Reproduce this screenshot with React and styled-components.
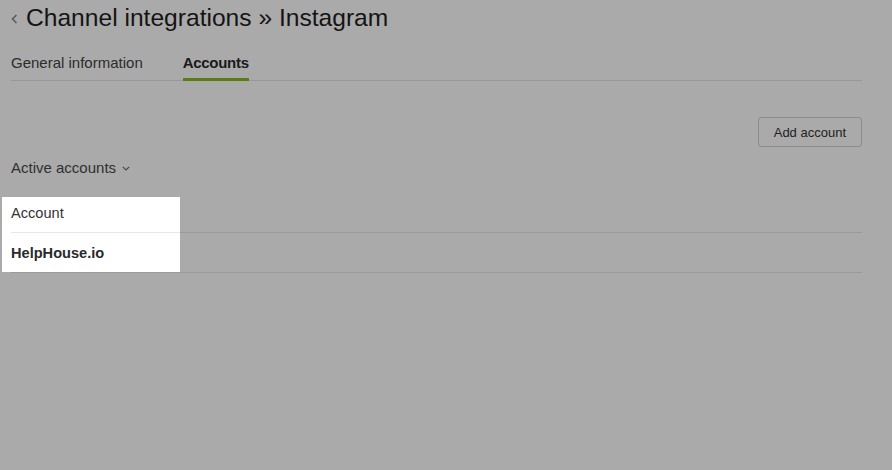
import React from 'react';
import styled, { createGlobalStyle } from 'styled-components';

const GlobalStyle = createGlobalStyle`
  body {
    margin: 0;
    background: #ffffff;
    font-family: "Liberation Sans", Arial, sans-serif;
    color: #333;
    overflow: hidden;
  }
`;

const Page = styled.div`
  padding: 0 30px 0 11px;
  min-height: 470px;
  box-sizing: border-box;
`;

const TitleRow = styled.h1`
  display: flex;
  align-items: center;
  gap: 8px;
  margin: 0;
  height: 36px;
  font-size: 24.6px;
  font-weight: 400;
  color: #1f1f1f;
`;

const BackIcon = styled.svg`
  width: 7px;
  height: 10px;
  margin-top: 1px;
  color: #8a8a8a;
`;

const Tabs = styled.nav`
  display: flex;
  gap: 40px;
  margin-top: 9px;
  border-bottom: 1px solid #e4e4e4;
`;

const Tab = styled.div`
  padding: 9px 0 7px;
  font-size: 15px;
  font-weight: ${({ active }) => (active ? 700 : 400)};
  letter-spacing: ${({ active }) => (active ? '-0.3px' : '0')};
  color: ${({ active }) => (active ? '#2a2a2a' : '#444')};
  border-bottom: 3px solid ${({ active }) => (active ? '#86bc1c' : 'transparent')};
  margin-bottom: -1px;
`;

const Toolbar = styled.div`
  display: flex;
  justify-content: flex-end;
  margin-top: 36px;
`;

const Button = styled.button`
  height: 30px;
  padding: 0 15px;
  background: #fff;
  border: 1px solid #d2d2d2;
  border-radius: 3px;
  font-family: inherit;
  font-size: 13px;
  color: #333;
`;

const Filter = styled.div`
  display: flex;
  align-items: center;
  gap: 6px;
  margin-top: 10px;
  height: 20px;
  font-size: 15px;
  color: #4a4a4a;
`;

const Caret = styled.svg`
  width: 8px;
  height: 5px;
  margin-top: 3px;
  color: #666;
`;

const TableWrap = styled.div`
  position: relative;
  margin-top: 20px;
`;

const Spotlight = styled.div`
  position: absolute;
  left: -9px;
  top: 0;
  width: 178px;
  height: 75px;
  box-shadow: 0 0 0 3000px rgba(0, 0, 0, 0.333);
  pointer-events: none;
`;

const Row = styled.div`
  display: flex;
  align-items: center;
  box-sizing: border-box;
  height: ${({ head }) => (head ? '36px' : '40px')};
  padding-bottom: ${({ head }) => (head ? '4px' : '0')};
  border-bottom: 1px solid #e8e8e8;
  font-size: 14.6px;
  font-weight: ${({ head }) => (head ? 400 : 700)};
  color: ${({ head }) => (head ? '#333' : '#2a2a2a')};
`;

export default function App() {
  return (
    <Page>
      <GlobalStyle />
      <TitleRow>
        <BackIcon viewBox="0 0 7 10" fill="none">
          <polyline points="5.5,1 1.5,5 5.5,9" stroke="currentColor" strokeWidth="1.6" />
        </BackIcon>
        Channel integrations » Instagram
      </TitleRow>
      <Tabs>
        <Tab>General information</Tab>
        <Tab active>Accounts</Tab>
      </Tabs>
      <Toolbar>
        <Button>Add account</Button>
      </Toolbar>
      <Filter>
        Active accounts
        <Caret viewBox="0 0 8 5" fill="none">
          <polyline points="0.8,0.8 4,4 7.2,0.8" stroke="currentColor" strokeWidth="1.1" />
        </Caret>
      </Filter>
      <TableWrap>
        <Row head>Account</Row>
        <Row>HelpHouse.io</Row>
        <Spotlight />
      </TableWrap>
    </Page>
  );
}
